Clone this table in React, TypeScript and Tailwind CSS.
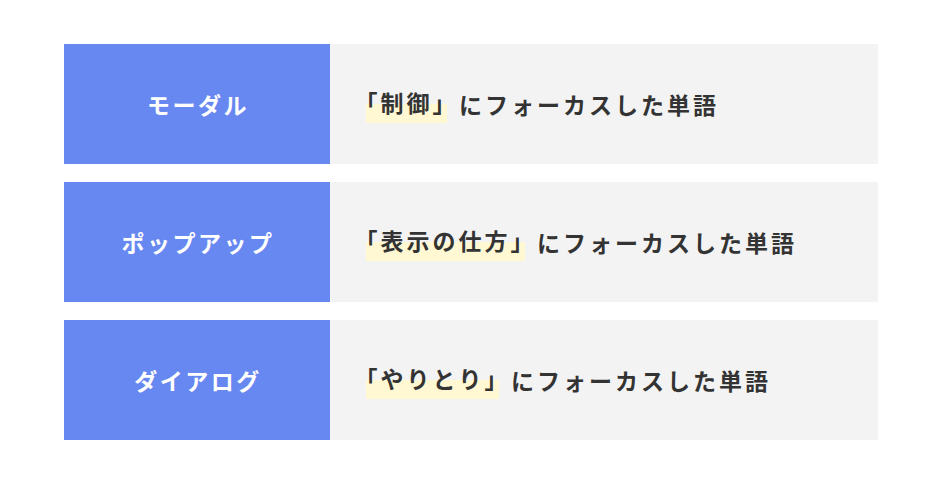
const rows = [
  { label: "モーダル", word: "制御" },
  { label: "ポップアップ", word: "表示の仕方" },
  { label: "ダイアログ", word: "やりとり" },
]

export default function App() {
  return (
    <div
      className="min-h-screen w-full bg-white px-16 pt-11 flex flex-col gap-[18px]"
      style={{ fontFamily: '"Noto Sans CJK JP", "Noto Sans", sans-serif' }}
    >
      {rows.map((row) => (
        <div key={row.label} className="flex h-[120px]">
          <div className="w-[266px] shrink-0 bg-[#6788f0] flex items-center justify-center text-white font-bold text-[23px] tracking-[2.5px] pl-[2px]">
            {row.label}
          </div>
          <div className="flex-1 bg-[#f3f3f3] flex items-center pl-9 text-[#333333] font-bold text-[23px] tracking-[3px]">
            <span className="pb-1 bg-[linear-gradient(transparent_50%,#fff8d2_50%)]">
              <span className="[font-feature-settings:'halt']">「</span>
              {row.word}
              <span className="[font-feature-settings:'halt']">」</span>
            </span>
            <span className="ml-[12px]">にフォーカスした単語</span>
          </div>
        </div>
      ))}
    </div>
  )
}
